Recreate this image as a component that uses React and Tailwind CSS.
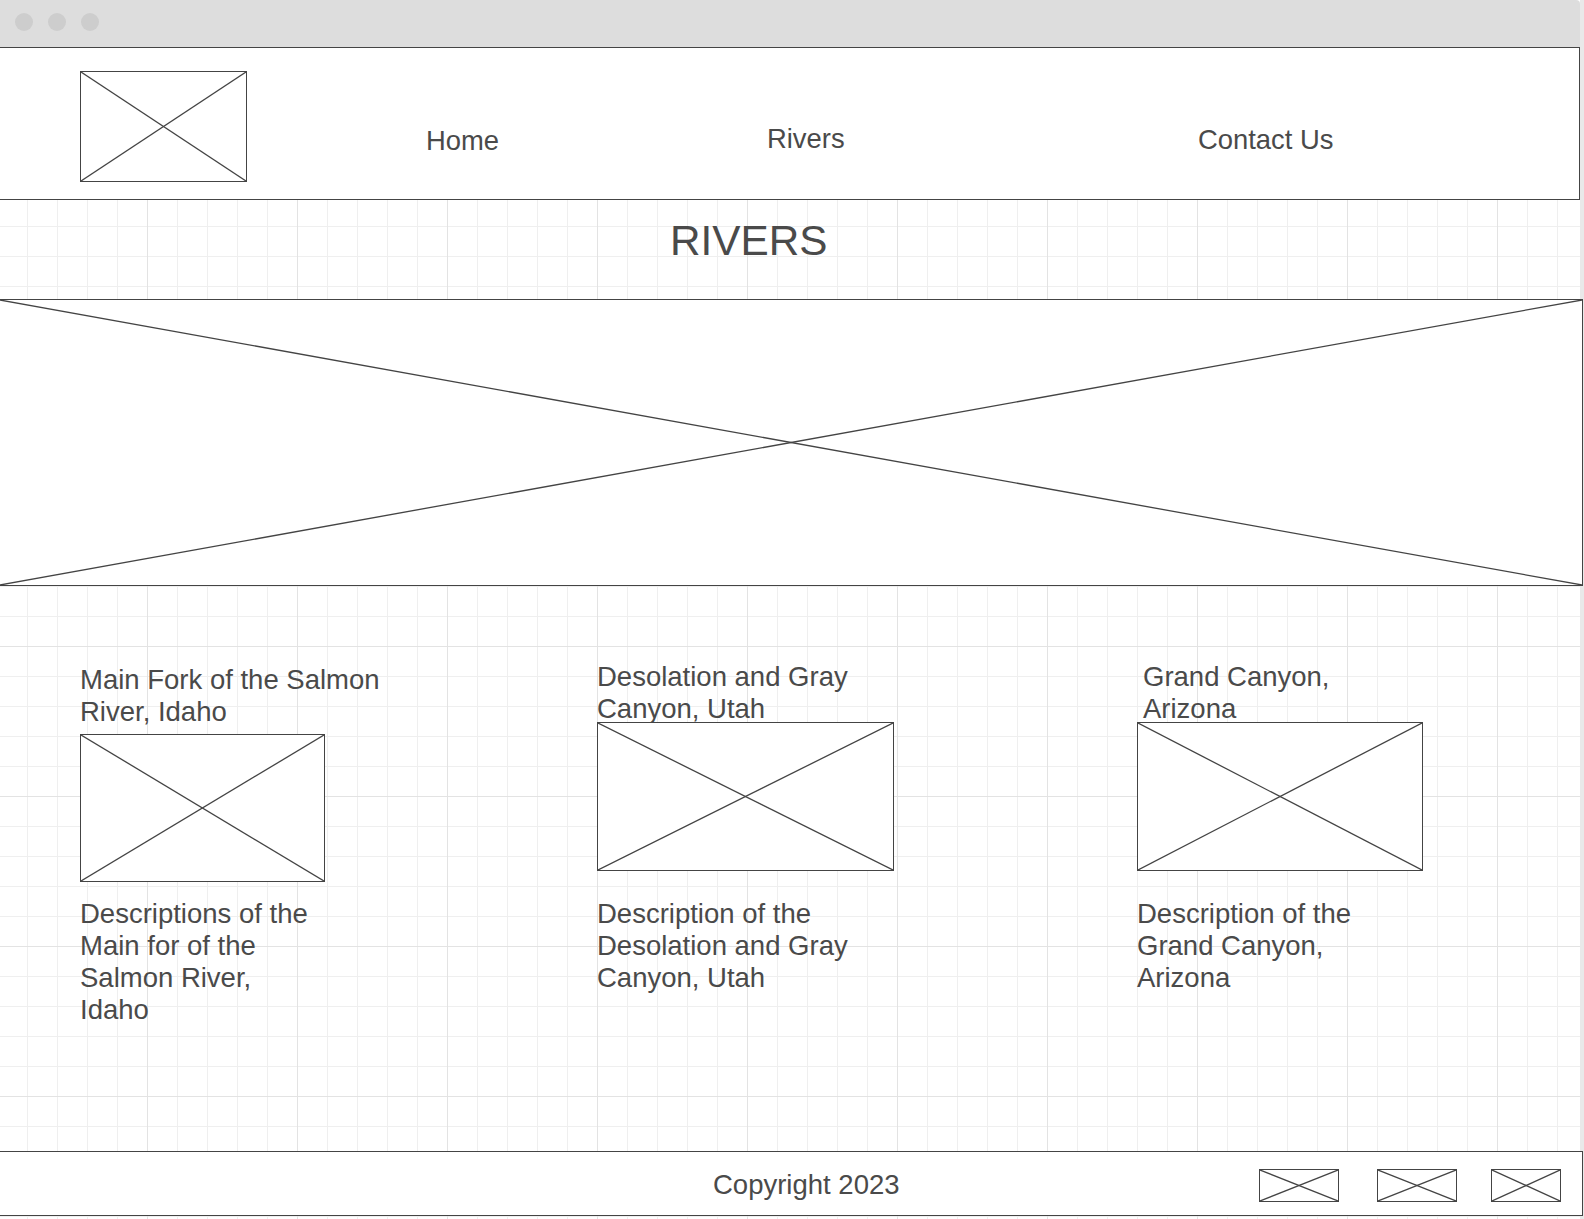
import clsx from 'clsx';

function Placeholder({ className }) {
  return (
    <div className={clsx('border border-[#444] bg-white shrink-0', className)}>
      <svg className="block w-full h-full" viewBox="0 0 100 100" preserveAspectRatio="none">
        <line x1="0" y1="0" x2="100" y2="100" stroke="#444" strokeWidth="1.3" vectorEffect="non-scaling-stroke" />
        <line x1="0" y1="100" x2="100" y2="0" stroke="#444" strokeWidth="1.3" vectorEffect="non-scaling-stroke" />
      </svg>
    </div>
  );
}

const cards = [
  {
    title: 'Main Fork of the Salmon River, Idaho',
    desc: 'Descriptions of the Main for of the Salmon River, Idaho',
    titleBox: 'mt-[78px] w-[320px]',
    img: 'mt-[6px] w-[245px] h-[148px]',
    descBox: 'mt-[16px] w-[240px]',
  },
  {
    title: 'Desolation and Gray Canyon, Utah',
    desc: 'Description of the Desolation and Gray Canyon, Utah',
    titleBox: 'mt-[75px] w-[296px]',
    img: 'mt-[-3px] w-[297px] h-[149px]',
    descBox: 'mt-[27px] w-[296px]',
  },
  {
    title: 'Grand Canyon, Arizona',
    desc: 'Description of the Grand Canyon, Arizona',
    titleBox: 'mt-[75px] ml-[6px] w-[230px]',
    img: 'mt-[-3px] w-[286px] h-[149px]',
    descBox: 'mt-[27px] w-[240px]',
  },
];

export default function App() {
  return (
    <div className="flex w-[1584px] h-[1219px] overflow-hidden bg-white text-[#4a4a4a] font-['Liberation_Sans',Arial,sans-serif]">
      {/* page */}
      <div className="flex flex-col w-[1580px] shrink-0 bg-white bg-[linear-gradient(to_right,#e3e3e3_1px,transparent_1px),linear-gradient(to_bottom,#e3e3e3_1px,transparent_1px),linear-gradient(to_right,#efefef_1px,transparent_1px),linear-gradient(to_bottom,#efefef_1px,transparent_1px)] bg-[size:150px_150px,150px_150px,30px_30px,30px_30px] bg-[position:147px_46px,147px_46px,27px_16px,27px_16px]">
        {/* browser chrome */}
        <div className="flex items-start gap-[15px] h-[47px] pl-[15px] pt-[13px] bg-[#dddddd] rounded-tr-[4px]">
          <span className="w-[18px] h-[18px] rounded-full bg-[#cdcdcd]"></span>
          <span className="w-[18px] h-[18px] rounded-full bg-[#cdcdcd]"></span>
          <span className="w-[18px] h-[18px] rounded-full bg-[#cdcdcd]"></span>
        </div>

        {/* header */}
        <header className="flex items-start h-[153px] border-y border-r border-[#444] bg-white pl-[80px] text-[27.4px] leading-[32px] whitespace-nowrap">
          <Placeholder className="mt-[23px] w-[167px] h-[111px]" />
          <div className="ml-[179px] mt-[77px] w-[341px]">Home</div>
          <div className="mt-[75px] w-[431px]">Rivers</div>
          <div className="mt-[76px]">Contact Us</div>
        </header>

        {/* title */}
        <div className="h-[99px] pl-[670px] pt-[17px]">
          <h1 className="text-[42.3px] leading-[48px] font-normal">RIVERS</h1>
        </div>

        {/* hero */}
        <Placeholder className="relative z-10 w-[1583px] h-[287px] border-l-0" />

        {/* rivers */}
        <div className="grid grid-cols-[517px_540px_1fr] h-[565px] pl-[80px] text-[27.5px] leading-[32px]">
          {cards.map((c) => (
            <div key={c.title} className="flex flex-col items-start">
              <p className={c.titleBox}>{c.title}</p>
              <Placeholder className={clsx('relative', c.img)} />
              <p className={c.descBox}>{c.desc}</p>
            </div>
          ))}
        </div>

        {/* footer */}
        <footer className="relative z-10 flex items-start w-[1583px] h-[65px] shrink-0 border-y border-r border-[#444] bg-white pl-[713px] text-[27.5px] leading-[32px]">
          <div className="mt-[17px] w-[546px] whitespace-nowrap">Copyright 2023</div>
          <Placeholder className="mt-[17px] w-[80px] h-[33px]" />
          <Placeholder className="mt-[17px] ml-[38px] w-[80px] h-[33px]" />
          <Placeholder className="mt-[17px] ml-[34px] w-[70px] h-[33px]" />
        </footer>
      </div>

      {/* right edge */}
      <div className="w-[4px] shrink-0 bg-[#e9e9e9]"></div>
    </div>
  );
}
